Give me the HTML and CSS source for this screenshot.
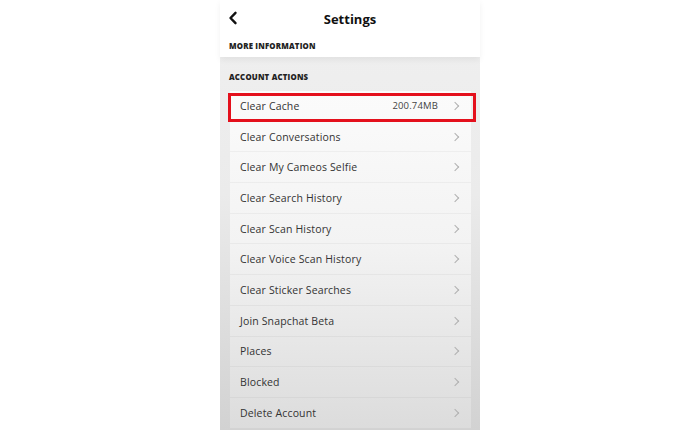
FILE: index.html
```html
<!DOCTYPE html>
<html lang="en">
<head>
    <meta charset="UTF-8">
    <meta name="viewport" content="width=device-width, initial-scale=1.0">
    <title>Settings</title>
    <link rel="stylesheet" href="styles.css">
</head>
<body>
    <div class="phone">
        <header class="top">
            <div class="title-bar">
                <button class="back" aria-label="Back">
                    <svg width="10" height="14" viewBox="0 0 10 14"><path d="M7.5 1.8 L2.5 7 L7.5 12.2" fill="none" stroke="#111" stroke-width="2.4" stroke-linecap="round" stroke-linejoin="round"/></svg>
                </button>
                <h1>Settings</h1>
            </div>
            <div class="section-label">MORE INFORMATION</div>
        </header>

        <div class="content">
            <div class="section-label">ACCOUNT ACTIONS</div>
            <ul class="list">
                <li class="row highlighted">Clear Cache <span class="value">200.74MB</span><span class="chev"></span></li>
                <li class="row">Clear Conversations <span class="chev"></span></li>
                <li class="row">Clear My Cameos Selfie <span class="chev"></span></li>
                <li class="row">Clear Search History <span class="chev"></span></li>
                <li class="row">Clear Scan History <span class="chev"></span></li>
                <li class="row">Clear Voice Scan History <span class="chev"></span></li>
                <li class="row">Clear Sticker Searches <span class="chev"></span></li>
                <li class="row">Join Snapchat Beta <span class="chev"></span></li>
                <li class="row">Places <span class="chev"></span></li>
                <li class="row">Blocked <span class="chev"></span></li>
                <li class="row">Delete Account <span class="chev"></span></li>
            </ul>
        </div>
    </div>
</body>
</html>
```

FILE: styles.css
```css
* {
    box-sizing: border-box;
    margin: 0;
    padding: 0;
}

body {
    background-color: #fff;
    font-family: 'Open Sans', 'Liberation Sans', sans-serif;
    color: #2b2b2b;
    height: 430px;
    overflow: hidden;
}

.phone {
    width: 260px;
    height: 430px;
    margin: 0 auto;
    display: flex;
    flex-direction: column;
    background: linear-gradient(#f0f0f0, #ebebeb 45%, #d2d2d2);
}

.top {
    background-color: #fff;
    height: 57px;
    box-shadow: 0 3px 6px rgba(0, 0, 0, 0.06);
}

.title-bar {
    height: 37px;
    display: flex;
    align-items: center;
    justify-content: center;
    position: relative;
}

.title-bar h1 {
    font-size: 13px;
    font-weight: 700;
    color: #111;
}

.back {
    position: absolute;
    left: 8px;
    top: 11px;
    border: none;
    background: none;
    line-height: 0;
}

.section-label {
    font-size: 7.8px;
    font-weight: 800;
    color: #222;
    padding-left: 9px;
    letter-spacing: 0.2px;
}

.top .section-label {
    line-height: 18px;
}

.content .section-label {
    line-height: 16px;
    margin-top: 12px;
    margin-bottom: 6px;
}

.list {
    list-style: none;
    margin: 0 9px 0 10px;
    background: linear-gradient(#fbfbfb, #f3f3f3 45%, #dcdcdc);
}

.row {
    height: 30.7px;
    display: flex;
    align-items: center;
    padding: 0 13px 0 10px;
    font-size: 10.5px;
    letter-spacing: 0.15px;
    color: #333;
    border-bottom: 1px solid rgba(0, 0, 0, 0.04);
    position: relative;
}

.row .value {
    margin-left: auto;
    font-size: 9.5px;
    color: #444;
    margin-right: 14px;
}

.chev {
    margin-left: auto;
    width: 6px;
    height: 6px;
    border-top: 1.4px solid #b0b0b0;
    border-right: 1.4px solid #b0b0b0;
    transform: rotate(45deg);
}

.value + .chev {
    margin-left: 0;
}

.highlighted::after {
    content: "";
    position: absolute;
    left: -2px;
    right: -5px;
    top: 2px;
    bottom: -1px;
    border: 3px solid #e4101c;
}
```
